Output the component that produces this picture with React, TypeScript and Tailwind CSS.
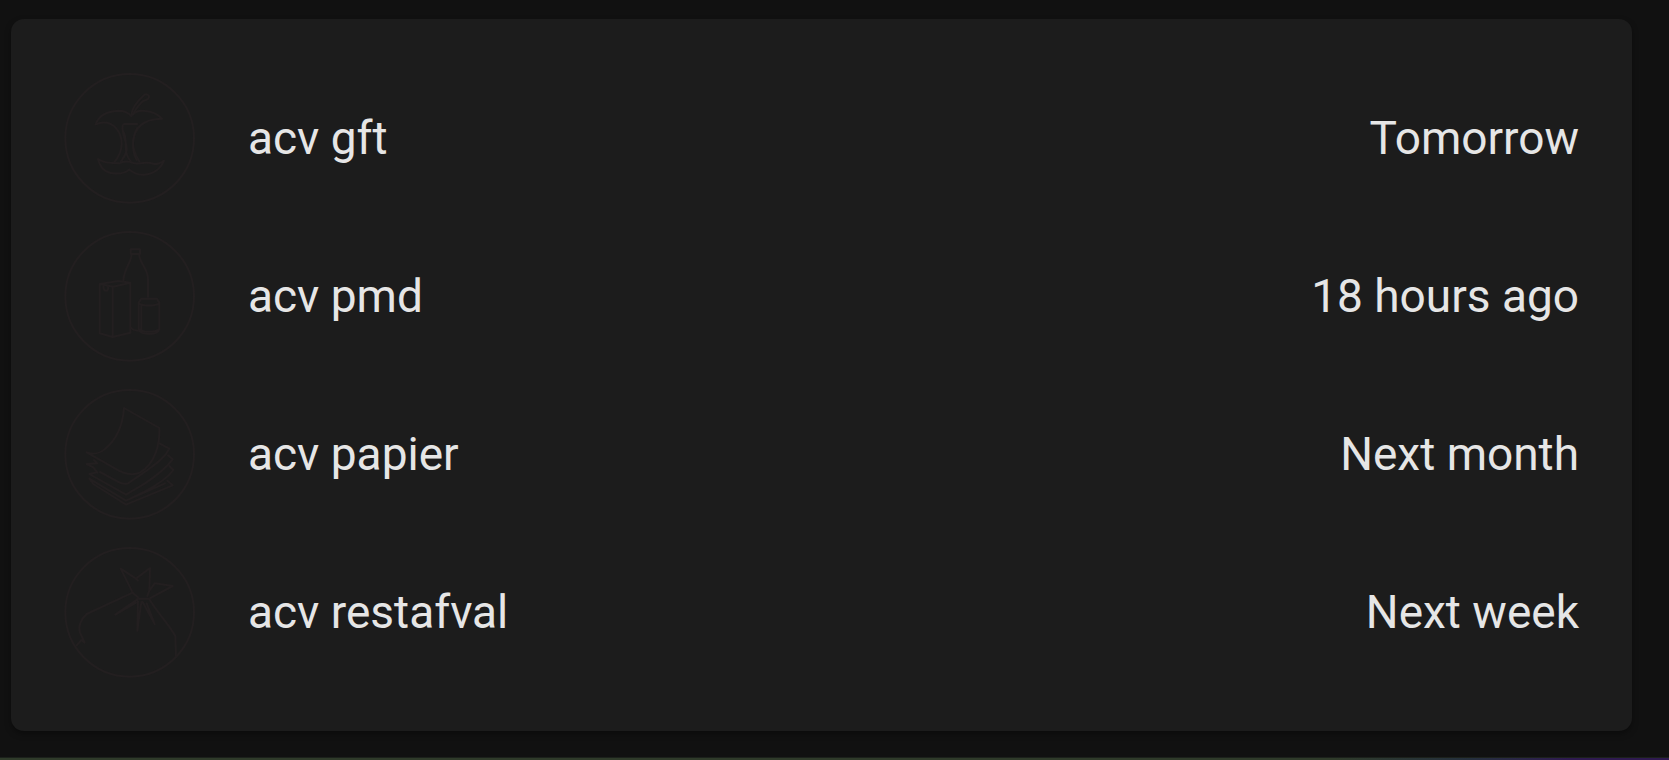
import type { ReactNode } from 'react';

type Pickup = { name: string; when: string; icon: ReactNode };

const pickups: Pickup[] = [
  {
    name: 'acv gft',
    when: 'Tomorrow',
    icon: (
      <>
        <path d="M137 193 C145 170 165 154 205 152 C222 152 235 158 244 168 C252 156 268 151 285 153 C308 155 325 164 336 176 C310 176 290 180 272 196 C245 222 240 262 268 304" />
        <path d="M137 193 C158 184 180 186 196 202 C222 230 222 272 192 308" />
        <path d="M244 165 C246 145 262 124 282 106 C288 100 298 104 297 112 C294 122 284 118 276 126 C264 138 254 152 250 163" />
        <path d="M222 192 H262 M218 196 C214 225 232 245 230 270 C228 285 218 295 212 306 M262 204 C246 232 244 270 260 300 M218 212 C238 240 214 270 242 304" />
        <path d="M144 297 C150 322 166 338 190 340 C210 342 228 338 238 328 C248 338 262 345 282 344 C310 342 332 326 342 302 C330 310 322 314 312 312 C290 304 268 312 254 310 C238 304 222 302 208 310 C186 306 166 314 144 297 Z" />
      </>
    ),
  },
  {
    name: 'acv pmd',
    when: '18 hours ago',
    icon: (
      <>
        <path d="M149 198 L190 206 L241 194 L205 189 Z M149 198 V346 L188 357 V206 M241 194 V344 L188 357" />
        <path d="M160 204 C160 224 178 222 174 206" />
        <path d="M242 94 H270 V108 H242 Z M245 108 C244 136 222 150 220 188 M267 108 C268 136 294 150 294 184 V238 M244 330 C250 338 258 338 266 338" />
        <path d="M274 242 H320 L328 254 V334 C326 342 318 348 298 348 C278 348 268 342 266 334 V254 Z M266 256 C280 265 314 265 328 256 M268 334 C280 344 314 344 326 334 M274 262 V334" />
      </>
    ),
  },
  {
    name: 'acv papier',
    when: 'Next month',
    icon: (
      <>
        <path d="M222 96 L328 156 C330 205 316 262 270 290 C245 300 218 292 196 278 L110 229 C130 236 152 232 166 218 C200 190 218 150 222 96 Z" />
        <path d="M328 202 L358 218 C345 245 320 262 290 284 L234 322 C222 326 212 322 202 316 L150 288" />
        <path d="M132 252 L142 262 L110 264 L130 274 L142 290 M354 238 L368 250 C350 274 318 300 285 322 L228 356 L118 294 L136 290" />
        <path d="M358 270 L370 282 C350 310 315 330 285 346 L228 374 L118 308 M118 308 L130 324 L228 386 L368 328 L352 314 M228 374 L345 322" />
      </>
    ),
  },
  {
    name: 'acv restafval',
    when: 'Next week',
    icon: (
      <>
        <path d="M248 176 L212 104 L258 134 L300 102 L298 170 L314 148 L368 156 L298 194 H262" />
        <path d="M258 134 L264 140" />
        <path d="M248 176 L110 240 C92 256 84 278 90 296 L104 326 L94 318 L80 334" />
        <path d="M248 176 L264 190 M298 170 L292 186 M262 196 L196 242 L258 206 M264 202 L262 290 L274 204 M278 204 L314 270 L290 208 M298 196 C325 240 350 262 376 306 L378 366" />
      </>
    ),
  },
];

export default function App() {
  return (
    <div className="flex min-h-screen flex-col bg-[#111111] font-[Roboto,sans-serif] text-[#e6e6e6]">
      <main className="grow pt-[19px] pr-[37px] pb-[26px] pl-[11px]">
        <ul className="flex flex-col gap-[26px] rounded-[13px] bg-[#1c1c1c] p-[53px] shadow-[0_3px_6px_rgba(0,0,0,0.35)]">
          {pickups.map(({ name, when, icon }) => (
            <li key={name} className="flex items-center gap-[52px]">
              <svg
                viewBox="42 36 396 396"
                className="size-[132px] shrink-0 fill-none stroke-[#231f20]"
                strokeWidth={6}
                strokeLinejoin="round"
                strokeLinecap="round"
                aria-hidden="true"
              >
                <circle cx="239" cy="235" r="193" />
                {icon}
              </svg>
              <span className="grow text-[46px] leading-[66px]">{name}</span>
              <span className="text-right text-[46px] leading-[66px]">{when}</span>
            </li>
          ))}
        </ul>
      </main>
      <div className="h-[3px] border-t border-[#1c211c] bg-linear-to-r from-[#2f3b2a] from-80% via-[#25303d] via-88% to-[#2f1a50] to-94%" />
    </div>
  );
}
